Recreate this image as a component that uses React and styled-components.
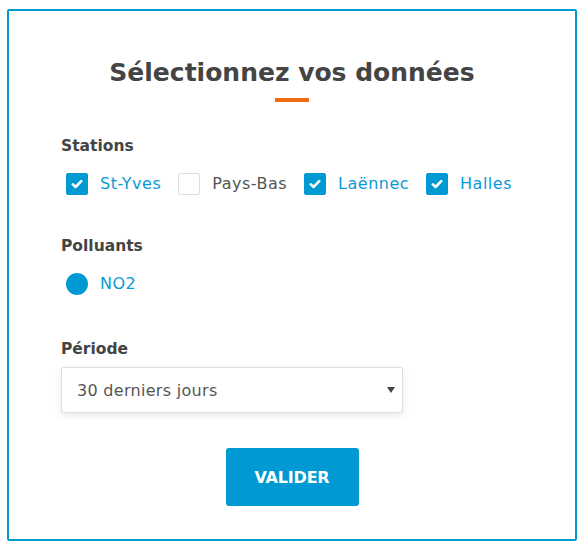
import React, { useState } from "react";
import styled, { createGlobalStyle } from "styled-components";

const Global = createGlobalStyle`
  html, body {
    margin: 0;
    padding: 0;
    background: #ffffff;
    font-family: "DejaVu Sans", "Noto Sans", sans-serif;
  }
`;

const Page = styled.div`
  padding: 9px 0 0 7px;
`;

const Panel = styled.div`
  box-sizing: border-box;
  width: 570px;
  height: 532px;
  border: 2px solid #0099d4;
  border-radius: 2px;
  padding: 46px 52px 0 52px;
  display: flex;
  flex-direction: column;
`;

const Header = styled.div`
  display: flex;
  flex-direction: column;
  align-items: center;
`;

const Title = styled.h1`
  margin: 0;
  font-size: 25px;
  line-height: 32px;
  font-weight: 700;
  color: #444444;
`;

const Bar = styled.div`
  width: 34px;
  height: 4px;
  background: #f06a12;
  margin-top: 9px;
`;

const Section = styled.div`
  margin-top: ${(p) => p.$top}px;
  display: flex;
  flex-direction: column;
`;

const Label = styled.div`
  font-size: 15.5px;
  font-weight: 700;
  line-height: 20px;
  color: #444444;
`;

const Options = styled.div`
  display: flex;
  align-items: center;
  gap: 17px;
  margin-top: 17px;
  padding-left: 5px;
`;

const Option = styled.label`
  display: flex;
  align-items: center;
  gap: 12px;
  font-size: 16px;
  line-height: 22px;
  letter-spacing: 0.5px;
  color: ${(p) => (p.$on ? "#0a9ad6" : "#555555")};
  cursor: pointer;
`;

const Box = styled.span`
  box-sizing: border-box;
  width: 22px;
  height: 22px;
  border-radius: 2px;
  display: flex;
  align-items: center;
  justify-content: center;
  background: ${(p) => (p.$on ? "#0099d4" : "#ffffff")};
  border: 1px solid ${(p) => (p.$on ? "#0099d4" : "#dddddd")};
`;

const Dot = styled.span`
  width: 22px;
  height: 22px;
  border-radius: 50%;
  background: #0099d4;
`;

const SelectWrap = styled.div`
  position: relative;
  width: 342px;
  margin-top: 8px;
`;

const Select = styled.select`
  box-sizing: border-box;
  width: 100%;
  height: 46px;
  appearance: none;
  border: 1px solid #dedede;
  border-radius: 2px;
  background: #ffffff;
  box-shadow: 0 2px 7px rgba(0, 0, 0, 0.1);
  padding: 0 30px 0 15px;
  font-family: inherit;
  font-size: 16px;
  letter-spacing: 0.3px;
  color: #555555;
  outline: none;
`;

const Arrow = styled.span`
  position: absolute;
  right: 8px;
  top: 20px;
  width: 0;
  height: 0;
  border-left: 4px solid transparent;
  border-right: 4px solid transparent;
  border-top: 6px solid #444444;
  pointer-events: none;
`;

const Submit = styled.button`
  align-self: center;
  margin-top: 35px;
  width: 133px;
  height: 58px;
  border: none;
  border-radius: 3px;
  background: #0099d4;
  color: #ffffff;
  font-family: inherit;
  font-size: 16px;
  font-weight: 700;
  letter-spacing: -0.2px;
  cursor: pointer;
`;

const Check = () => (
  <svg width="12" height="10" viewBox="0 0 12 10">
    <path
      d="M1.8 5.4 L4.6 8 L10.2 2.2"
      fill="none"
      stroke="#ffffff"
      strokeWidth="2.6"
      strokeLinecap="round"
      strokeLinejoin="round"
    />
  </svg>
);

const stations = [
  { name: "St-Yves", on: true },
  { name: "Pays-Bas", on: false },
  { name: "Laënnec", on: true },
  { name: "Halles", on: true },
];

export default function App() {
  const [sel, setSel] = useState(stations);
  const toggle = (i) =>
    setSel(sel.map((s, j) => (j === i ? { ...s, on: !s.on } : s)));

  return (
    <Page>
      <Global />
      <Panel>
        <Header>
          <Title>Sélectionnez vos données</Title>
          <Bar />
        </Header>

        <Section $top={34}>
          <Label>Stations</Label>
          <Options>
            {sel.map((s, i) => (
              <Option key={s.name} $on={s.on} onClick={() => toggle(i)}>
                <Box $on={s.on}>{s.on && <Check />}</Box>
                {s.name}
              </Option>
            ))}
          </Options>
        </Section>

        <Section $top={41}>
          <Label>Polluants</Label>
          <Options>
            <Option $on>
              <Dot />
              NO2
            </Option>
          </Options>
        </Section>

        <Section $top={44}>
          <Label>Période</Label>
          <SelectWrap>
            <Select defaultValue="30">
              <option value="30">30 derniers jours</option>
              <option value="7">7 derniers jours</option>
            </Select>
            <Arrow />
          </SelectWrap>
        </Section>

        <Submit>VALIDER</Submit>
      </Panel>
    </Page>
  );
}
